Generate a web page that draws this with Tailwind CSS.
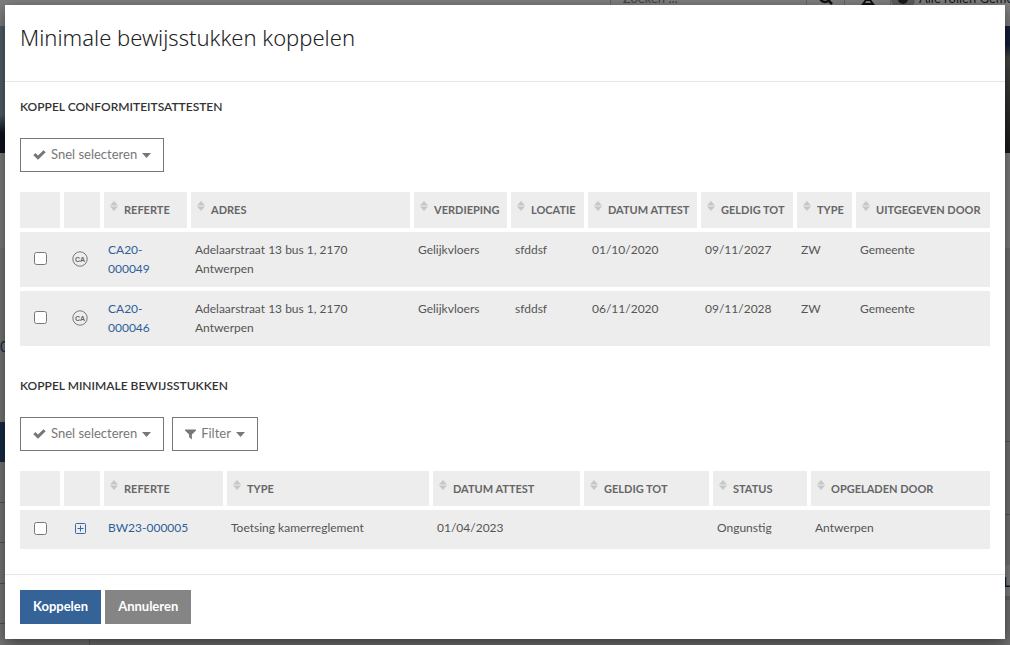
<!DOCTYPE html>
<html lang="nl">
<head>
    <meta charset="UTF-8">
    <meta name="viewport" content="width=device-width, initial-scale=1.0">
    <title>Minimale bewijsstukken koppelen</title>
    <script src="https://cdn.jsdelivr.net/npm/@tailwindcss/browser@4"></script>
</head>
<body class="bg-white font-['Lato','Liberation_Sans',sans-serif] text-[#555]">
    <svg class="hidden" aria-hidden="true">
        <symbol id="sort" viewBox="0 0 8 10"><path d="M4 0 8 4.5H0zM0 5.5h8L4 10z" fill="#c6c6c6"/></symbol>
        <symbol id="check" viewBox="0 0 13 10"><path d="M0.3 5.2 2.4 3.1 5 5.6 10.5 0.2 12.7 2.3 5 9.8z" fill="#777"/></symbol>
        <symbol id="caret" viewBox="0 0 9 5"><path d="M0 0h9L4.5 5z" fill="#777"/></symbol>
        <symbol id="funnel" viewBox="0 0 12 11"><path d="M0 0h12v1L7.5 5.5V11L4.5 8.5v-3L0 1z" fill="#777"/></symbol>
        <symbol id="ca" viewBox="0 0 16 16">
            <circle cx="8" cy="8" r="7.2" fill="none" stroke="#777" stroke-width="1"/>
            <text x="8" y="10.5" text-anchor="middle" font-size="7" font-weight="bold" fill="#666" font-family="Liberation Sans, sans-serif">CA</text>
        </symbol>
        <symbol id="plus" viewBox="0 0 11 11"><path d="M1.5 .5h8a1 1 0 0 1 1 1v8a1 1 0 0 1-1 1h-8a1 1 0 0 1-1-1v-8a1 1 0 0 1 1-1zM5.5 2.5v6M2.5 5.5h6" fill="none" stroke="#3a68a8"/></symbol>
    </svg>

    <!-- Page behind the dialog -->
    <div class="fixed inset-0 overflow-hidden bg-[#e4e4e4] text-[13px]" aria-hidden="true">
        <div class="-mt-7 flex h-[54px] items-stretch justify-end bg-white">
            <div class="flex w-[197px] items-center border-x border-[#ccc] px-3 text-[#888]">Zoeken ...</div>
            <div class="flex w-[38px] items-center justify-center border-r border-[#ccc]">
                <svg class="size-4" viewBox="0 0 16 16" fill="none" stroke="#222" stroke-width="2.5"><circle cx="7" cy="6" r="5"/><path d="m10.5 9.500 3.500 3.500"/></svg>
            </div>
            <div class="flex w-[46px] items-center justify-center border-r border-[#ccc]">
                <svg class="size-4" viewBox="0 0 16 16" fill="none" stroke="#222" stroke-width="2"><path d="M8 3v6M3 13l3-4h4l3 4z"/></svg>
            </div>
            <div class="flex w-[119px] items-center gap-1 overflow-hidden whitespace-nowrap text-[#333]">
                <svg class="size-6 shrink-0" viewBox="0 0 24 24"><circle cx="12" cy="12" r="12" fill="#bbb"/><circle cx="12" cy="12" r="5" fill="#333"/></svg>
                Alle rollen Gemeente
            </div>
        </div>
        <div class="flex h-[127px] justify-between">
            <div class="w-1/2 bg-linear-to-b from-[#a5c0cc] from-70% to-[#1d2436] to-85%"></div>
            <div class="w-1/2 bg-linear-to-b from-[#2b3f70] from-15% via-[#8d8d84] via-25% to-[#333]"></div>
        </div>
        <div class="h-[95px] bg-white"></div>
        <div class="flex">
            <div class="h-screen w-[90px] border-r border-[#bbb] bg-[#efefef]">
                <div class="h-[174px] pt-[86px] text-[15px] leading-6 text-[#2a5a90]">00</div>
                <div class="h-10 bg-[#2d5688]"></div>
                <div class="h-[41px] border-b border-[#aaa]"></div>
                <div class="h-10 border-b border-[#aaa]"></div>
                <div class="h-[41px] border-b border-[#aaa]"></div>
                <div class="h-10 border-b border-[#aaa]"></div>
            </div>
            <div class="flex-1">
                <div class="h-[194px] border-b border-[#aaa]"></div>
                <div class="h-[73px] border-b border-[#aaa]"></div>
                <div class="h-[50px]"></div>
                <div class="h-[35px] border-b-4 border-[#ccc] bg-white pt-2 text-right font-bold text-[#333]">LL</div>
            </div>
        </div>
    </div>

    <div class="fixed inset-0 overflow-auto bg-black/50 p-[5px]">
        <div role="dialog" aria-labelledby="dialog-title" class="bg-white shadow-[0_5px_15px_rgba(0,0,0,0.5)]">
            <div class="border-b border-[#e5e5e5] px-[15px] pt-4 pb-7">
                <h1 id="dialog-title" class="font-['Noto_Sans','Lato',sans-serif] text-[22px] leading-8 font-light text-[#222]">Minimale bewijsstukken koppelen</h1>
            </div>

            <div class="px-[15px] pt-[15px] pb-[21px]">
                <h2 class="mb-[21px] text-xs leading-5 font-semibold text-[#333]">KOPPEL CONFORMITEITSATTESTEN</h2>
                <div class="mb-5 flex gap-2 text-[13px] text-[#777]">
                    <button class="flex h-[34px] items-center gap-[5px] border border-[#777] px-3">
                        <svg class="h-[10px] w-[13px]"><use href="#check"/></svg>Snel selecteren<svg class="h-[5px] w-[9px]"><use href="#caret"/></svg>
                    </button>
                </div>

                <table class="w-full table-fixed border-separate border-spacing-0 text-left text-xs leading-[19px]">
                    <colgroup>
                        <col class="w-[44px]"><col class="w-[40px]"><col class="w-[87px]"><col><col class="w-[97px]"><col class="w-[77px]"><col class="w-[113px]"><col class="w-[96px]"><col class="w-[59px]"><col class="w-[134px]">
                    </colgroup>
                    <thead class="text-[11px] text-[#666]">
                        <tr class="h-10 *:border-r-4 *:border-b-4 *:border-white *:bg-[#ededed] *:px-[6px] *:pb-[2px] *:whitespace-nowrap">
                            <th></th>
                            <th></th>
                            <th><svg class="mr-[6px] inline h-[10px] w-2 align-[3px]"><use href="#sort"/></svg>REFERTE</th>
                            <th><svg class="mr-[6px] inline h-[10px] w-2 align-[3px]"><use href="#sort"/></svg>ADRES</th>
                            <th><svg class="mr-[6px] inline h-[10px] w-2 align-[3px]"><use href="#sort"/></svg>VERDIEPING</th>
                            <th><svg class="mr-[6px] inline h-[10px] w-2 align-[3px]"><use href="#sort"/></svg>LOCATIE</th>
                            <th><svg class="mr-[6px] inline h-[10px] w-2 align-[3px]"><use href="#sort"/></svg>DATUM ATTEST</th>
                            <th><svg class="mr-[6px] inline h-[10px] w-2 align-[3px]"><use href="#sort"/></svg>GELDIG TOT</th>
                            <th><svg class="mr-[6px] inline h-[10px] w-2 align-[3px]"><use href="#sort"/></svg>TYPE</th>
                            <th class="border-r-0!"><svg class="mr-[6px] inline h-[10px] w-2 align-[3px]"><use href="#sort"/></svg>UITGEGEVEN DOOR</th>
                        </tr>
                    </thead>
                    <tbody>
                        <tr class="h-[59px] *:border-b-4 *:border-white *:bg-[#ededed] *:px-1 *:py-2 *:align-top">
                            <td class="pr-2! pb-[10px]! align-middle!"><input type="checkbox" aria-label="Selecteer CA20-000049" class="mx-auto block size-[13px]"></td>
                            <td class="pr-3! pb-[10px]! align-middle!"><svg class="mx-auto block size-4"><use href="#ca"/></svg></td>
                            <td><a href="#" class="text-[#2d5f99]">CA20-<br>000049</a></td>
                            <td>Adelaarstraat 13 bus 1, 2170<br>Antwerpen</td>
                            <td>Gelijkvloers</td>
                            <td>sfddsf</td>
                            <td>01/10/2020</td>
                            <td>09/11/2027</td>
                            <td>ZW</td>
                            <td>Gemeente</td>
                        </tr>
                        <tr class="h-[59px] *:border-b-4 *:border-white *:bg-[#ededed] *:px-1 *:py-2 *:align-top">
                            <td class="pr-2! pb-[10px]! align-middle!"><input type="checkbox" aria-label="Selecteer CA20-000046" class="mx-auto block size-[13px]"></td>
                            <td class="pr-3! pb-[10px]! align-middle!"><svg class="mx-auto block size-4"><use href="#ca"/></svg></td>
                            <td><a href="#" class="text-[#2d5f99]">CA20-<br>000046</a></td>
                            <td>Adelaarstraat 13 bus 1, 2170<br>Antwerpen</td>
                            <td>Gelijkvloers</td>
                            <td>sfddsf</td>
                            <td>06/11/2020</td>
                            <td>09/11/2028</td>
                            <td>ZW</td>
                            <td>Gemeente</td>
                        </tr>
                    </tbody>
                </table>

                <h2 class="mt-[26px] mb-[21px] text-xs leading-5 font-semibold text-[#333]">KOPPEL MINIMALE BEWIJSSTUKKEN</h2>
                <div class="mb-5 flex gap-2 text-[13px] text-[#777]">
                    <button class="flex h-[34px] items-center gap-[5px] border border-[#777] px-3">
                        <svg class="h-[10px] w-[13px]"><use href="#check"/></svg>Snel selecteren<svg class="h-[5px] w-[9px]"><use href="#caret"/></svg>
                    </button>
                    <button class="flex h-[34px] items-center gap-[5px] border border-[#777] px-3">
                        <svg class="h-[11px] w-[11px]"><use href="#funnel"/></svg>Filter<svg class="h-[5px] w-[9px]"><use href="#caret"/></svg>
                    </button>
                </div>

                <table class="w-full table-fixed border-separate border-spacing-0 text-left text-xs leading-[19px]">
                    <colgroup>
                        <col class="w-[44px]"><col class="w-[40px]"><col class="w-[123px]"><col><col class="w-[151px]"><col class="w-[129px]"><col class="w-[98px]"><col class="w-[179px]">
                    </colgroup>
                    <thead class="text-[11px] text-[#666]">
                        <tr class="h-[39px] *:border-r-4 *:border-b-4 *:border-white *:bg-[#ededed] *:px-[6px] *:whitespace-nowrap">
                            <th></th>
                            <th></th>
                            <th><svg class="mr-[6px] inline h-[10px] w-2 align-[3px]"><use href="#sort"/></svg>REFERTE</th>
                            <th><svg class="mr-[6px] inline h-[10px] w-2 align-[3px]"><use href="#sort"/></svg>TYPE</th>
                            <th><svg class="mr-[6px] inline h-[10px] w-2 align-[3px]"><use href="#sort"/></svg>DATUM ATTEST</th>
                            <th><svg class="mr-[6px] inline h-[10px] w-2 align-[3px]"><use href="#sort"/></svg>GELDIG TOT</th>
                            <th><svg class="mr-[6px] inline h-[10px] w-2 align-[3px]"><use href="#sort"/></svg>STATUS</th>
                            <th class="border-r-0!"><svg class="mr-[6px] inline h-[10px] w-2 align-[3px]"><use href="#sort"/></svg>OPGELADEN DOOR</th>
                        </tr>
                    </thead>
                    <tbody>
                        <tr class="h-[43px] *:border-b-4 *:border-white *:bg-[#ededed] *:px-1 *:py-2 *:align-top">
                            <td class="pr-2! pb-[10px]! align-middle!"><input type="checkbox" aria-label="Selecteer BW23-000005" class="mx-auto block size-[13px]"></td>
                            <td class="pr-3! pb-[10px]! align-middle!"><svg class="mx-auto block size-[11px]"><use href="#plus"/></svg></td>
                            <td><a href="#" class="text-[#2d5f99]">BW23-000005</a></td>
                            <td>Toetsing kamerreglement</td>
                            <td>01/04/2023</td>
                            <td></td>
                            <td>Ongunstig</td>
                            <td>Antwerpen</td>
                        </tr>
                    </tbody>
                </table>
            </div>

            <div class="flex gap-1 border-t border-[#e5e5e5] p-[15px] text-[13px] font-bold text-white">
                <button class="h-[34px] bg-[#356297] px-[13px]">Koppelen</button>
                <button class="h-[34px] bg-[#858585] px-[13px]">Annuleren</button>
            </div>
        </div>
    </div>
</body>
</html>
